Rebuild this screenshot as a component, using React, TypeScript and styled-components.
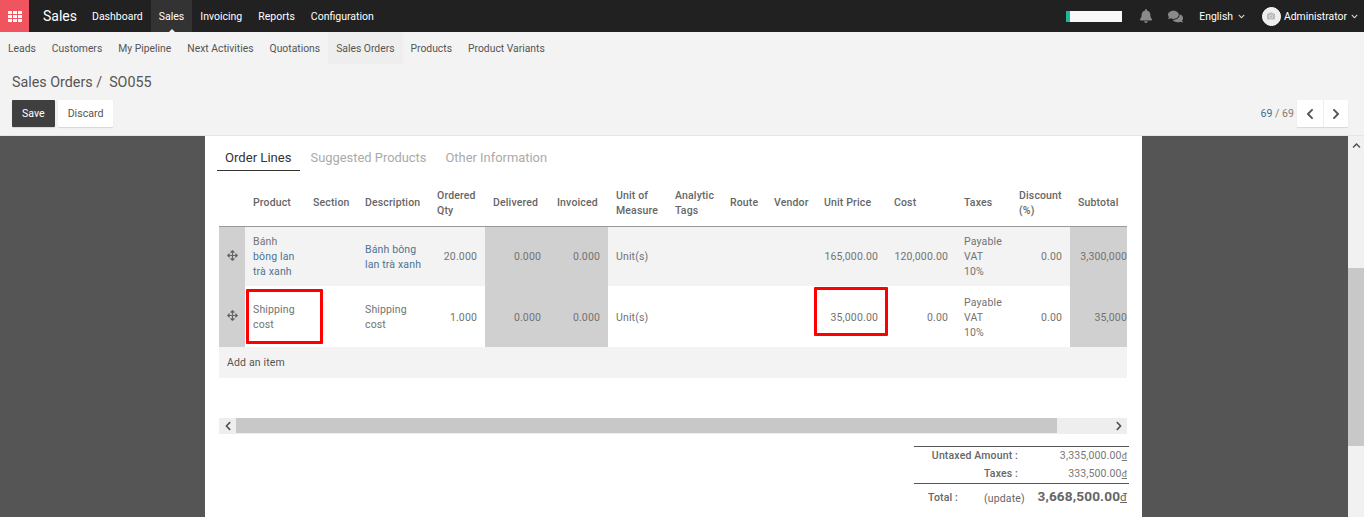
import React from "react";
import styled, { createGlobalStyle } from "styled-components";
import { FaBell, FaComments, FaChevronLeft, FaChevronRight, FaChevronUp, FaChevronDown, FaArrowsAlt, FaCamera } from "react-icons/fa";

const Global = createGlobalStyle`
  html, body { margin: 0; padding: 0; height: 517px; overflow: hidden; }
  body { font-family: Roboto, "Liberation Sans", sans-serif; font-size: 11px; color: #666; background: #f3f3f3; }
  * { box-sizing: border-box; }
`;

const Page = styled.div`display: flex; flex-direction: column; height: 517px; overflow: hidden;`;
const TopBar = styled.header`display: flex; align-items: center; height: 32px; background: #212121; color: #fff; flex: none;`;
const Apps = styled.div`width: 29px; height: 32px; background: #f0545f; display: flex; align-items: center; justify-content: center;`;
const Brand = styled.div`font-size: 14px; margin-left: 14px; width: 35px;`;
const TopMenu = styled.nav`display: flex; margin-left: 6px; height: 32px;`;
const TopItem = styled.div<{ $active?: boolean }>`
  position: relative; display: flex; align-items: center; height: 32px; padding: 0 8px; font-size: 10.5px;
  background: ${p => (p.$active ? "#333" : "transparent")};
  &::after {
    content: ""; display: ${p => (p.$active ? "block" : "none")}; position: absolute; left: 50%; margin-left: -3px; bottom: 0;
    border: 3px solid transparent; border-bottom-color: #f3f3f3; border-top: 0;
  }
`;
const TopRight = styled.div`margin-left: auto; display: flex; align-items: center; height: 32px; font-size: 10.4px;`;
const Progress = styled.div`width: 56px; height: 11px; background: #f8f8f8; border-left: 4px solid #1fb795;`;
const Bell = styled(FaBell)`color: #8a8a8a; font-size: 14px; margin-left: 17px;`;
const Chat = styled(FaComments)`color: #8a8a8a; font-size: 15px; margin-left: 15px;`;
const Lang = styled.div`display: flex; align-items: center; gap: 5px; margin-left: 16px;`;
const Caret = styled(FaChevronDown)`font-size: 7px; color: #ddd;`;
const Avatar = styled.div`width: 19px; height: 19px; border-radius: 50%; background: #eee; border: 1px solid #fff; color: #bbb; display: flex; align-items: center; justify-content: center; font-size: 8px; margin-left: 17px;`;
const User = styled.div`display: flex; align-items: center; gap: 4px; margin: 0 6px 0 3px;`;

const SubBar = styled.nav`display: flex; height: 32px; flex: none; background: #f3f3f3;`;
const SubItem = styled.div<{ $active?: boolean }>`
  display: flex; align-items: center; padding: 0 8px; font-size: 10.35px; color: #555;
  background: ${p => (p.$active ? "#eeeeee" : "transparent")};
`;

const Control = styled.section`flex: none; height: 72px; padding: 0 16px 0 12px; border-bottom: 1px solid #e6e6e6; background: #f3f3f3;`;
const Crumbs = styled.div`font-size: 14.3px; color: #555; height: 36px; display: flex; align-items: center; gap: 7px;`;
const ControlRow = styled.div`display: flex; align-items: center; gap: 3px;`;
const Button = styled.button<{ $primary?: boolean }>`
  height: 27px; border: 0; border-radius: 1px; font: 10.6px Roboto, sans-serif; padding: 0 10px;
  background: ${p => (p.$primary ? "#3f3f3f" : "#fff")}; color: ${p => (p.$primary ? "#fff" : "#555")};
  box-shadow: 0 1px 1px rgba(0,0,0,.12);
`;
const Pager = styled.div`margin-left: auto; display: flex; align-items: center; gap: 3px; font-size: 10.6px;`;
const PagerNums = styled.span`color: #8a7a70;`;
const PagerCur = styled.span`color: #3f6f96;`;
const PagerBtns = styled.div`display: flex; height: 27px; background: #fff; box-shadow: 0 1px 1px rgba(0,0,0,.1);`;
const PagerBtn = styled.div`width: 25.5px; display: flex; align-items: center; justify-content: center; color: #555; font-size: 12px; & + & { border-left: 1px solid #eee; }`;

const Body = styled.div`flex: 1; display: flex; min-height: 0;`;
const Backdrop = styled.main`flex: 1; background: #555; display: flex; justify-content: center; min-width: 0; overflow: hidden;`;
const Sheet = styled.div`position: relative; width: 937px; margin-left: -1px; background: #fff; padding: 9px 14px 0 12px; height: 100%;`;
const PageBar = styled.aside`width: 16px; background: #f1f1f1; position: relative; flex: none; display: flex; flex-direction: column; align-items: center; padding-top: 5px; color: #505050; font-size: 9px;`;
const PageThumb = styled.div`position: absolute; left: 0; right: 0; top: 132px; height: 178px; background: #c8c8c8;`;

const Tabs = styled.div`display: flex; height: 26px; gap: 3px;`;
const Tab = styled.div<{ $active?: boolean }>`
  padding: 0 8px; font-size: ${p => (p.$active ? "13.1px" : "12.9px")}; line-height: 25px; height: 26px;
  color: ${p => (p.$active ? "#333" : "#aaa")};
  border-bottom: 1px solid ${p => (p.$active ? "#333" : "transparent")};
`;
const TableClip = styled.div`width: 908px; margin: 9px 0 0 2px; overflow: hidden;`;
const Table = styled.table`border-collapse: collapse; table-layout: fixed; width: 931px; font-size: 10.5px; letter-spacing: .15px; line-height: 15px;`;
const Th = styled.th`
  height: 46px; padding: 0 8px; vertical-align: middle; font-weight: 500; color: #666; text-align: left;
  border-bottom: 1px solid #999;
`;
const Tr = styled.tr<{ $alt?: boolean }>`
  background: ${p => (p.$alt ? "#f3f3f3" : "#fff")};
  height: ${p => (p.$alt ? "60px" : "61px")};
`;
const Td = styled.td<{ $right?: boolean; $ro?: boolean; $link?: boolean }>`
  padding: 1px ${p => (p.$right ? "8px" : "5px")} 0 8px; vertical-align: middle;
  text-align: ${p => (p.$right ? "right" : "left")}; color: ${p => (p.$link ? "#4d7391" : "#727272")};
  background: ${p => (p.$ro ? "#d0d0d0" : "transparent")};
`;
const TaxTd = styled(Td)`padding-right: 8px;`;
const SubtotalTd = styled(Td)`white-space: nowrap;`;
const Dark = styled.span`color: #727272;`;
const Handle = styled.td`background: #d0d0d0; text-align: center; color: #666; font-size: 11px; padding: 2px 0 0;`;
const AddRow = styled.td`height: 31px; background: #f3f3f3; padding: 0 8px; color: #555;`;
const AddLabel = styled.span`color: #555;`;

const HScroll = styled.div`display: flex; width: 908px; height: 16px; margin: 40px 0 0 2px; background: #eee; color: #505050; font-size: 10px;`;
const HBtn = styled.div`width: 17px; display: flex; align-items: center; justify-content: center; flex: none;`;
const HThumb = styled.div`width: 821px; height: 15px; background: #c8c8c8;`;
const HRest = styled.div`flex: 1;`;

const Totals = styled.div`width: 215px; margin: 12px -1px 0 auto; font-size: 10.5px; letter-spacing: .15px;`;
const TotalRow = styled.div<{ $top?: boolean }>`
  display: flex; align-items: center; height: ${p => (p.$top ? "27px" : "18.5px")}; padding-right: 2px;
  &:first-child { border-top: 1px solid #555; }
`;
const TotalLabel = styled.div`width: 104px; text-align: right; font-weight: 500; color: #666; flex: none;`;
const TotalValue = styled.div`flex: 1; text-align: right; color: #777;`;
const Divider = styled.div`border-top: 1px solid #555;`;
const GrandLabel = styled.div`width: 44px; text-align: right; font-weight: 500; color: #666; flex: none;`;
const Update = styled.div`margin-left: 26px; font-size: 10.5px; color: #666; padding-top: 2px;`;
const GrandValue = styled.div`flex: 1; text-align: right; font-size: 13.6px; font-weight: 700; color: #666; padding-bottom: 4px;`;
const Dong = styled.span`text-decoration: underline; font-weight: 400; font-size: .85em; letter-spacing: 0;`;

const Mark = styled.div<{ $x: number; $y: number; $w: number; $h: number }>`
  position: absolute; left: ${p => p.$x}px; top: ${p => p.$y}px; width: ${p => p.$w}px; height: ${p => p.$h}px;
  border: 3px solid #f00; border-radius: 1px; pointer-events: none;
`;

const AppsIcon = () => (
  <svg width="14" height="11" viewBox="0 0 14 11" fill="#fff">
    {[0, 4, 8].map(y => [0, 5, 10].map(x => <rect key={`${x}-${y}`} x={x} y={y} width="4" height="3" />))}
  </svg>
);

const cols = [26, 60, 52, 72, 56, 64, 59, 59, 55, 44, 50, 70, 70, 55, 59, 80];
const headers = ["Product", "Section", "Description", "Ordered Qty", "Delivered", "Invoiced", "Unit of Measure", "Analytic Tags", "Route", "Vendor", "Unit Price", "Cost", "Taxes", "Discount (%)", "Subtotal"];

const rows = [
  { alt: true, link: true, product: "Bánh", product2: "bông lan", product3: "trà xanh", desc: "Bánh bông lan trà xanh", qty: "20.000", price: "165,000.00", cost: "120,000.00", sub: "3,300,000.00" },
  { alt: false, link: false, product: "Shipping cost", product2: "", product3: "", desc: "Shipping cost", qty: "1.000", price: "35,000.00", cost: "0.00", sub: "35,000.00" },
];

export default function App() {
  return (
    <Page>
      <Global />
      <TopBar>
        <Apps><AppsIcon /></Apps>
        <Brand>Sales</Brand>
        <TopMenu>
          <TopItem>Dashboard</TopItem>
          <TopItem $active>Sales</TopItem>
          <TopItem>Invoicing</TopItem>
          <TopItem>Reports</TopItem>
          <TopItem>Configuration</TopItem>
        </TopMenu>
        <TopRight>
          <Progress />
          <Bell />
          <Chat />
          <Lang>English <Caret /></Lang>
          <Avatar><FaCamera /></Avatar>
          <User>Administrator <Caret /></User>
        </TopRight>
      </TopBar>
      <SubBar>
        {["Leads", "Customers", "My Pipeline", "Next Activities", "Quotations", "Sales Orders", "Products", "Product Variants"].map(s => (
          <SubItem key={s} $active={s === "Sales Orders"}>{s}</SubItem>
        ))}
      </SubBar>
      <Control>
        <Crumbs><span>Sales Orders /</span><span>SO055</span></Crumbs>
        <ControlRow>
          <Button $primary>Save</Button>
          <Button>Discard</Button>
          <Pager>
            <PagerNums><PagerCur>69</PagerCur> / 69</PagerNums>
            <PagerBtns>
              <PagerBtn><FaChevronLeft /></PagerBtn>
              <PagerBtn><FaChevronRight /></PagerBtn>
            </PagerBtns>
          </Pager>
        </ControlRow>
      </Control>
      <Body>
        <Backdrop>
          <Sheet>
            <Tabs>
              <Tab $active>Order Lines</Tab>
              <Tab>Suggested Products</Tab>
              <Tab>Other Information</Tab>
            </Tabs>
            <TableClip>
              <Table>
                <colgroup>{cols.map((w, i) => <col key={i} width={w} />)}</colgroup>
                <thead>
                  <tr>
                    <Th />
                    {headers.map(h => <Th key={h}>{h}</Th>)}
                  </tr>
                </thead>
                <tbody>
                  {rows.map(r => (
                    <Tr key={r.desc} $alt={r.alt}>
                      <Handle><FaArrowsAlt /></Handle>
                      <Td $link={r.link}>
                        {r.product2 ? <><Dark>{r.product}</Dark><br />{r.product2}<br />{r.product3}</> : r.product}
                      </Td>
                      <Td />
                      <Td $link={r.link}>{r.desc}</Td>
                      <Td $right>{r.qty}</Td>
                      <Td $right $ro>0.000</Td>
                      <Td $right $ro>0.000</Td>
                      <Td>Unit(s)</Td>
                      <Td />
                      <Td />
                      <Td />
                      <Td $right>{r.price}</Td>
                      <Td $right>{r.cost}</Td>
                      <TaxTd>Payable VAT 10%</TaxTd>
                      <Td $right>0.00</Td>
                      <SubtotalTd $ro $right>{r.sub}</SubtotalTd>
                    </Tr>
                  ))}
                  <tr><AddRow colSpan={16}><AddLabel>Add an item</AddLabel></AddRow></tr>
                </tbody>
              </Table>
            </TableClip>
            <HScroll>
              <HBtn><FaChevronLeft /></HBtn>
              <HThumb />
              <HRest />
              <HBtn><FaChevronRight /></HBtn>
            </HScroll>
            <Totals>
              <TotalRow><TotalLabel>Untaxed Amount :</TotalLabel><TotalValue>3,335,000.00<Dong>đ</Dong></TotalValue></TotalRow>
              <TotalRow><TotalLabel>Taxes :</TotalLabel><TotalValue>333,500.00<Dong>đ</Dong></TotalValue></TotalRow>
              <Divider />
              <TotalRow $top><GrandLabel>Total :</GrandLabel><Update>(update)</Update><GrandValue>3,668,500.00<Dong>đ</Dong></GrandValue></TotalRow>
            </Totals>
            <Mark $x={41} $y={153} $w={77} $h={55} />
            <Mark $x={609} $y={151} $w={74} $h={49} />
          </Sheet>
        </Backdrop>
        <PageBar>
          <FaChevronUp />
          <PageThumb />
        </PageBar>
      </Body>
    </Page>
  );
}
